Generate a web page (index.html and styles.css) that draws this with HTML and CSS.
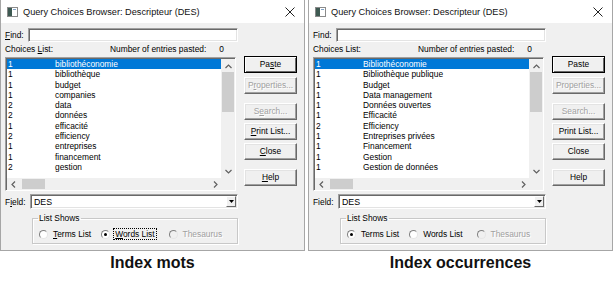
FILE: index.html
```html
<!DOCTYPE html>
<html lang="fr">
<head>
    <meta charset="UTF-8">
    <meta name="viewport" content="width=device-width, initial-scale=1.0">
    <title>Query Choices Browser</title>
    <link rel="stylesheet" href="styles.css">
</head>
<body>
    <div class="windows">
        <!-- index mots -->
        <div class="window">
            <div class="titlebar">
                <svg class="app-icon" width="11" height="10" viewBox="0 0 11 10">
                    <rect x="0.5" y="0.5" width="10" height="9" fill="#fff" stroke="#8a8a8a"/>
                    <rect x="1" y="1" width="4" height="8" fill="#3e5a52"/>
                    <rect x="6" y="2" width="3" height="1" fill="#7fa3c8"/>
                </svg>
                <span class="title">Query Choices Browser: Descripteur (DES)</span>
                <svg class="close" width="10" height="10" viewBox="0 0 10 10">
                    <path d="M0.5 0.5 L9.5 9.5 M9.5 0.5 L0.5 9.5" stroke="#222" stroke-width="1"/>
                </svg>
            </div>
            <div class="dialog">
                <div class="find-row">
                    <span class="lbl find-lbl"><u>F</u>ind:</span>
                    <div class="textbox find"></div>
                </div>
                <div class="list-head">
                    <span>Choices <u>L</u>ist:</span>
                    <span class="count">Number of entries pasted:<span class="count-n">0</span></span>
                </div>
                <div class="main">
                    <div class="listbox">
                        <div class="rows">
                            <div class="row selected"><span class="n">1</span>bibliothéconomie</div>
                            <div class="row"><span class="n">1</span>bibliothèque</div>
                            <div class="row"><span class="n">1</span>budget</div>
                            <div class="row"><span class="n">1</span>companies</div>
                            <div class="row"><span class="n">2</span>data</div>
                            <div class="row"><span class="n">2</span>données</div>
                            <div class="row"><span class="n">1</span>efficacité</div>
                            <div class="row"><span class="n">2</span>efficiency</div>
                            <div class="row"><span class="n">1</span>entreprises</div>
                            <div class="row"><span class="n">1</span>financement</div>
                            <div class="row"><span class="n">2</span>gestion</div>
                        </div>
                        <div class="vscroll">
                            <svg class="arrow" width="7" height="5" viewBox="0 0 7 5"><path d="M0.5 4 L3.5 1 L6.5 4" fill="none" stroke="#606060" stroke-width="1.2"/></svg>
                            <div class="vthumb"></div>
                            <svg class="arrow down" width="7" height="5" viewBox="0 0 7 5"><path d="M0.5 1 L3.5 4 L6.5 1" fill="none" stroke="#606060" stroke-width="1.2"/></svg>
                        </div>
                        <div class="hscroll">
                            <svg class="arrow" width="5" height="7" viewBox="0 0 5 7"><path d="M4 0.5 L1 3.5 L4 6.5" fill="none" stroke="#606060" stroke-width="1.2"/></svg>
                            <div class="hthumb"></div>
                            <svg class="arrow right" width="5" height="7" viewBox="0 0 5 7"><path d="M1 0.5 L4 3.5 L1 6.5" fill="none" stroke="#606060" stroke-width="1.2"/></svg>
                        </div>
                        <div class="corner"></div>
                    </div>
                    <div class="buttons">
                        <div class="btn default">Pa<u>s</u>te</div>
                        <div class="btn disabled gap-s">P<u>r</u>operties...</div>
                        <div class="btn disabled gap-l">S<u>e</u>arch...</div>
                        <div class="btn gap-xs"><u>P</u>rint List...</div>
                        <div class="btn gap-xs"><u>C</u>lose</div>
                        <div class="btn gap-l"><u>H</u>elp</div>
                    </div>
                </div>
                <div class="field-row">
                    <span class="lbl field-lbl">F<u>i</u>eld:</span>
                    <div class="textbox combo">
                        <span>DES</span>
                        <span class="drop"><svg width="5" height="3" viewBox="0 0 5 3"><path d="M0 0 H5 L2.5 3 Z" fill="#000"/></svg></span>
                    </div>
                </div>
                <fieldset class="shows">
                    <legend>List Shows</legend>
                    <div class="radios">
                        <span class="opt opt-terms"><span class="radio"></span><span class="opt-text"><u>T</u>erms List</span></span>
                        <span class="opt opt-words"><span class="radio checked"></span><span class="opt-text focus"><u>W</u>ords List</span></span>
                        <span class="opt opt-thes disabled"><span class="radio"></span><span class="opt-text">Thesaurus</span></span>
                    </div>
                </fieldset>
            </div>
        </div>

        <!-- index occurrences -->
        <div class="window">
            <div class="titlebar">
                <svg class="app-icon" width="11" height="10" viewBox="0 0 11 10">
                    <rect x="0.5" y="0.5" width="10" height="9" fill="#fff" stroke="#8a8a8a"/>
                    <rect x="1" y="1" width="4" height="8" fill="#3e5a52"/>
                    <rect x="6" y="2" width="3" height="1" fill="#7fa3c8"/>
                </svg>
                <span class="title">Query Choices Browser: Descripteur (DES)</span>
                <svg class="close" width="10" height="10" viewBox="0 0 10 10">
                    <path d="M0.5 0.5 L9.5 9.5 M9.5 0.5 L0.5 9.5" stroke="#222" stroke-width="1"/>
                </svg>
            </div>
            <div class="dialog">
                <div class="find-row">
                    <span class="lbl find-lbl">Find:</span>
                    <div class="textbox find"></div>
                </div>
                <div class="list-head">
                    <span>Choices List:</span>
                    <span class="count">Number of entries pasted:<span class="count-n">0</span></span>
                </div>
                <div class="main">
                    <div class="listbox">
                        <div class="rows">
                            <div class="row selected"><span class="n">1</span>Bibliothéconomie</div>
                            <div class="row"><span class="n">1</span>Bibliothèque publique</div>
                            <div class="row"><span class="n">1</span>Budget</div>
                            <div class="row"><span class="n">1</span>Data management</div>
                            <div class="row"><span class="n">1</span>Données ouvertes</div>
                            <div class="row"><span class="n">1</span>Efficacité</div>
                            <div class="row"><span class="n">2</span>Efficiency</div>
                            <div class="row"><span class="n">1</span>Entreprises privées</div>
                            <div class="row"><span class="n">1</span>Financement</div>
                            <div class="row"><span class="n">1</span>Gestion</div>
                            <div class="row"><span class="n">1</span>Gestion de données</div>
                        </div>
                        <div class="vscroll">
                            <svg class="arrow" width="7" height="5" viewBox="0 0 7 5"><path d="M0.5 4 L3.5 1 L6.5 4" fill="none" stroke="#606060" stroke-width="1.2"/></svg>
                            <div class="vthumb"></div>
                            <svg class="arrow down" width="7" height="5" viewBox="0 0 7 5"><path d="M0.5 1 L3.5 4 L6.5 1" fill="none" stroke="#606060" stroke-width="1.2"/></svg>
                        </div>
                        <div class="hscroll">
                            <svg class="arrow" width="5" height="7" viewBox="0 0 5 7"><path d="M4 0.5 L1 3.5 L4 6.5" fill="none" stroke="#606060" stroke-width="1.2"/></svg>
                            <div class="hthumb"></div>
                            <svg class="arrow right" width="5" height="7" viewBox="0 0 5 7"><path d="M1 0.5 L4 3.5 L1 6.5" fill="none" stroke="#606060" stroke-width="1.2"/></svg>
                        </div>
                        <div class="corner"></div>
                    </div>
                    <div class="buttons">
                        <div class="btn default">Paste</div>
                        <div class="btn disabled gap-s">Properties...</div>
                        <div class="btn disabled gap-l">Search...</div>
                        <div class="btn gap-xs">Print List...</div>
                        <div class="btn gap-xs">Close</div>
                        <div class="btn gap-l">Help</div>
                    </div>
                </div>
                <div class="field-row">
                    <span class="lbl field-lbl">Field:</span>
                    <div class="textbox combo">
                        <span>DES</span>
                        <span class="drop"><svg width="5" height="3" viewBox="0 0 5 3"><path d="M0 0 H5 L2.5 3 Z" fill="#000"/></svg></span>
                    </div>
                </div>
                <fieldset class="shows">
                    <legend>List Shows</legend>
                    <div class="radios">
                        <span class="opt opt-terms"><span class="radio checked"></span><span class="opt-text">Terms List</span></span>
                        <span class="opt opt-words"><span class="radio"></span><span class="opt-text">Words List</span></span>
                        <span class="opt opt-thes disabled"><span class="radio"></span><span class="opt-text">Thesaurus</span></span>
                    </div>
                </fieldset>
            </div>
        </div>
    </div>

    <div class="captions">
        <div class="caption">Index mots</div>
        <div class="caption">Index occurrences</div>
    </div>
</body>
</html>
```

FILE: styles.css
```css
* {
    box-sizing: border-box;
}

body {
    margin: 0;
    width: 613px;
    height: 288px;
    overflow: hidden;
    background-color: #fff;
    font-family: "Liberation Sans", Arial, sans-serif;
    color: #000;
}

.windows {
    display: flex;
    gap: 3px;
}

.window {
    flex: none;
    width: 305px;
    height: 251px;
    border: 1px solid #a6a6a6;
    border-top: none;
    background-color: #f0f0f0;
}

/* title bar */

.titlebar {
    display: flex;
    align-items: center;
    height: 23px;
    padding-left: 6px;
    background-color: #fff;
}

.app-icon {
    flex: none;
}

.title {
    margin-left: 5px;
    font-size: 9.2px;
    color: #111;
}

.close {
    margin-left: auto;
    margin-right: 9px;
}

/* dialog body */

.dialog {
    padding: 5px 4px 0 4px;
    font-size: 8.4px;
    line-height: 10px;
}

u {
    text-decoration-thickness: 1px;
    text-underline-offset: 1px;
}

.textbox {
    background-color: #fff;
    border: 1px solid #a0a0a0;
    border-right-color: #fff;
    border-bottom-color: #fff;
    box-shadow: inset 1px 1px #696969, inset -1px -1px #e3e3e3;
}

.find-row {
    display: flex;
    align-items: center;
}

.find-lbl {
    width: 23px;
}

.textbox.find {
    width: 210px;
    height: 14px;
}

.list-head {
    display: flex;
    justify-content: space-between;
    width: 219px;
    margin-top: 2px;
    height: 11px;
}

.count-n {
    margin-left: 13px;
}

.main {
    display: flex;
    align-items: flex-start;
    margin-top: 2px;
}

/* list box */

.listbox {
    display: grid;
    grid-template-columns: 1fr 14px;
    grid-template-rows: 1fr 12px;
    width: 231px;
    height: 134px;
    background-color: #fff;
    border: 1px solid #a0a0a0;
    border-right-color: #fff;
    border-bottom-color: #fff;
    box-shadow: inset 1px 1px #696969;
    padding: 1px 0 0 1px;
}

.rows {
    overflow: hidden;
    line-height: 10.3px;
}

.row {
    white-space: nowrap;
    padding-left: 1px;
}

.row.selected {
    background-color: #0078d7;
    color: #fff;
}

.n {
    display: inline-block;
    width: 47px;
}

.vscroll {
    display: flex;
    flex-direction: column;
    align-items: center;
    background-color: #f0f0f0;
    padding-top: 5px;
}

.vthumb {
    width: 12px;
    height: 40px;
    margin-top: 3px;
    background-color: #cdcdcd;
}

.vscroll .down {
    margin-top: auto;
    margin-bottom: 4px;
}

.hscroll {
    display: flex;
    align-items: center;
    background-color: #f0f0f0;
    padding-left: 4px;
}

.hthumb {
    width: 23px;
    height: 10px;
    margin-left: 6px;
    background-color: #cdcdcd;
}

.hscroll .right {
    margin-left: auto;
    margin-right: 3px;
}

.corner {
    background-color: #f0f0f0;
}

/* push buttons */

.buttons {
    display: flex;
    flex-direction: column;
    margin-left: 8px;
    margin-top: -1px;
}

.btn {
    width: 53px;
    height: 17px;
    line-height: 15px;
    text-align: center;
    white-space: nowrap;
    background-color: #f0f0f0;
    border: 1px solid;
    border-color: #fff #696969 #696969 #fff;
    box-shadow: inset -1px -1px #a0a0a0, inset 1px 1px #e3e3e3;
}

.btn.default {
    border-color: #000;
    box-shadow: inset 1px 1px #fff, inset -1px -1px #696969;
}

.btn.disabled {
    color: #a0a0a0;
    text-shadow: 1px 1px #fff;
}

.gap-xs {
    margin-top: 3px;
}

.gap-s {
    margin-top: 4px;
}

.gap-l {
    margin-top: 9px;
}

/* field combo */

.field-row {
    display: flex;
    align-items: center;
    margin-top: 3px;
}

.field-lbl {
    width: 25px;
}

.textbox.combo {
    display: flex;
    align-items: center;
    justify-content: space-between;
    width: 208px;
    height: 15px;
    padding: 2px 1px 2px 3px;
    font-size: 8.8px;
}

.drop {
    display: flex;
    align-items: center;
    justify-content: center;
    width: 10px;
    height: 11px;
    background-color: #f0f0f0;
    border: 1px solid;
    border-color: #fff #696969 #696969 #fff;
}

/* list shows group */

.shows {
    width: 206px;
    min-width: 0;
    height: 31px;
    margin: 4px 0 0 27px;
    padding: 0 0 0 6px;
    border: 1px solid #c8c8c8;
    box-shadow: inset 1px 1px #fff, 1px 1px #fff;
}

.shows legend {
    padding: 0 1px;
    margin-left: -1px;
    line-height: 10px;
}

.radios {
    display: flex;
    align-items: center;
    margin-top: 5px;
    white-space: nowrap;
}

.opt {
    display: flex;
    flex: none;
    align-items: center;
}

.opt-words {
    margin-left: 8px;
}

.opt-thes {
    margin-left: 12px;
}

.radio {
    position: relative;
    flex: none;
    width: 9px;
    height: 9px;
    margin-right: 3px;
    border-radius: 50%;
    background-color: #fff;
    border: 1px solid;
    border-color: #808080 #e6e6e6 #e6e6e6 #808080;
}

.radio.checked::after {
    content: "";
    position: absolute;
    left: 2px;
    top: 2px;
    width: 3px;
    height: 3px;
    border-radius: 50%;
    background-color: #000;
}

.opt-text {
    padding: 0 1px;
    border: 1px solid transparent;
}

.opt-text.focus {
    border: 1px dotted #000;
}

.opt.disabled {
    color: #a0a0a0;
    text-shadow: 1px 1px #fff;
}

.opt.disabled .radio {
    background-color: #f0f0f0;
}

/* captions */

.captions {
    display: flex;
    gap: 3px;
    margin-top: 3px;
}

.caption {
    width: 305px;
    text-align: center;
    font-size: 16px;
    line-height: 18px;
    font-weight: bold;
    color: #111;
}
```
